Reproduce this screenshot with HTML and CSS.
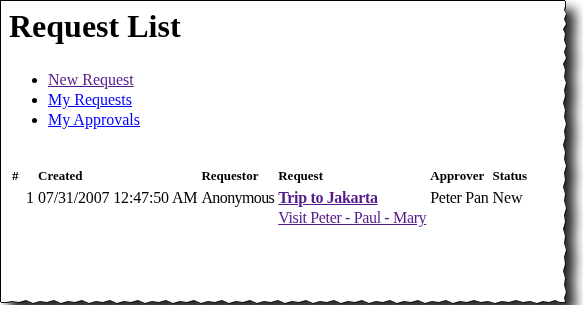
FILE: index.html
```html
<!DOCTYPE html>
<html>
<head>
<meta charset="utf-8">
<title>Request List</title>
<link rel="stylesheet" href="styles.css">
</head>
<body>
<div class="frame">
  <div class="paper">
    <h1 class="title">Request List</h1>
    <ul class="nav">
      <li><a class="visited" href="#">New Request</a></li>
      <li><a href="#">My Requests</a></li>
      <li><a href="#">My Approvals</a></li>
    </ul>
    <table class="requests">
      <thead>
        <tr>
          <th class="num">#</th>
          <th class="created">Created</th>
          <th>Requestor</th>
          <th>Request</th>
          <th>Approver</th>
          <th>Status</th>
        </tr>
      </thead>
      <tbody>
        <tr>
          <td class="num">1</td>
          <td class="date">07/31/2007 12:47:50 AM</td>
          <td class="who">Anonymous</td>
          <td class="req"><a class="visited strong" href="#">Trip to Jakarta</a><br><a class="visited" href="#">Visit Peter - Paul - Mary</a></td>
          <td class="approver">Peter Pan</td>
          <td>New</td>
        </tr>
      </tbody>
    </table>
  </div>
</div>
</body>
</html>
```

FILE: styles.css
```css
html, body {
  margin: 0;
  padding: 0;
  background: #fff;
}

body {
  font-family: "Liberation Serif", "Times New Roman", serif;
  font-size: 16px;
  color: #000;
}

.frame {
  width: 568px;
  height: 305px;
  filter: drop-shadow(1px 1px 0 #111) drop-shadow(9px 9px 6px rgba(0, 0, 0, 0.85));
}

.paper {
  box-sizing: border-box;
  width: 568px;
  height: 305px;
  background: #fff;
  border-top: 1px solid #000;
  border-left: 1px solid #000;
  padding: 7px 8px 0 8px;
  clip-path: polygon(
    0 0, 565px 0,
    565px 6px, 564px 10px, 566px 14px, 564px 19px, 566px 24px, 563px 29px,
    565px 34px, 564px 40px, 566px 46px, 564px 52px, 566px 58px, 563px 64px,
    565px 70px, 564px 77px, 566px 83px, 564px 90px, 565px 96px, 563px 103px,
    565px 110px, 564px 117px, 566px 124px, 564px 131px, 565px 138px, 563px 145px,
    565px 152px, 564px 159px, 566px 166px, 564px 173px, 565px 180px, 563px 187px,
    565px 194px, 564px 201px, 566px 208px, 564px 215px, 565px 222px, 563px 229px,
    565px 236px, 564px 243px, 566px 250px, 564px 257px, 565px 264px, 563px 271px,
    565px 278px, 564px 285px, 566px 292px, 564px 298px, 565px 302px,
    560px 302px, 555px 300px, 549px 302px, 543px 301px, 537px 303px, 530px 301px,
    523px 302px, 516px 300px, 509px 302px, 502px 301px, 495px 303px, 488px 301px,
    481px 302px, 474px 300px, 467px 302px, 460px 301px, 453px 303px, 446px 300px,
    439px 302px, 432px 301px, 425px 303px, 418px 300px, 411px 302px, 404px 301px,
    397px 303px, 390px 300px, 383px 302px, 376px 301px, 369px 303px, 362px 300px,
    355px 302px, 348px 301px, 341px 303px, 334px 300px, 327px 302px, 320px 301px,
    313px 303px, 306px 300px, 299px 302px, 292px 301px, 285px 303px, 278px 300px,
    271px 302px, 264px 301px, 257px 303px, 250px 300px, 243px 302px, 236px 301px,
    229px 303px, 222px 300px, 215px 302px, 208px 301px, 201px 303px, 194px 300px,
    187px 302px, 180px 301px, 173px 303px, 166px 300px, 159px 302px, 152px 301px,
    145px 303px, 138px 300px, 131px 302px, 124px 301px, 117px 303px, 110px 300px,
    103px 302px, 96px 301px, 89px 303px, 82px 300px, 75px 302px, 68px 301px,
    61px 303px, 54px 300px, 47px 302px, 40px 301px, 33px 303px, 26px 300px,
    19px 302px, 12px 301px, 6px 302px, 0 302px
  );
}

.title {
  margin: 0;
  font-size: 32px;
  font-weight: bold;
  line-height: 37px;
}

.nav {
  margin: 25px 0 0 0;
  padding-left: 39px;
  list-style: disc;
}

.nav li {
  line-height: 20px;
}

a {
  color: #0000ff;
  text-decoration: underline;
}

a.visited {
  color: #551a8b;
}

a.strong {
  font-weight: bold;
}

.requests {
  margin-top: 35px;
  margin-left: 0;
  border-collapse: separate;
  border-spacing: 2px;
}

.requests th {
  font-size: 13px;
  font-weight: bold;
  text-align: left;
  padding: 1px;
  line-height: 15px;
  white-space: nowrap;
}

.requests td {
  padding: 2px 1px 1px;
  line-height: 20px;
  vertical-align: top;
  white-space: nowrap;
}

.requests .num {
  width: 22px;
}

.requests td.num {
  text-align: right;
}

.requests .date {
  letter-spacing: -0.15px;
}

.requests .who {
  letter-spacing: -0.6px;
}

.requests .req {
  letter-spacing: -0.35px;
}

.requests .approver {
  letter-spacing: -0.3px;
}
```
